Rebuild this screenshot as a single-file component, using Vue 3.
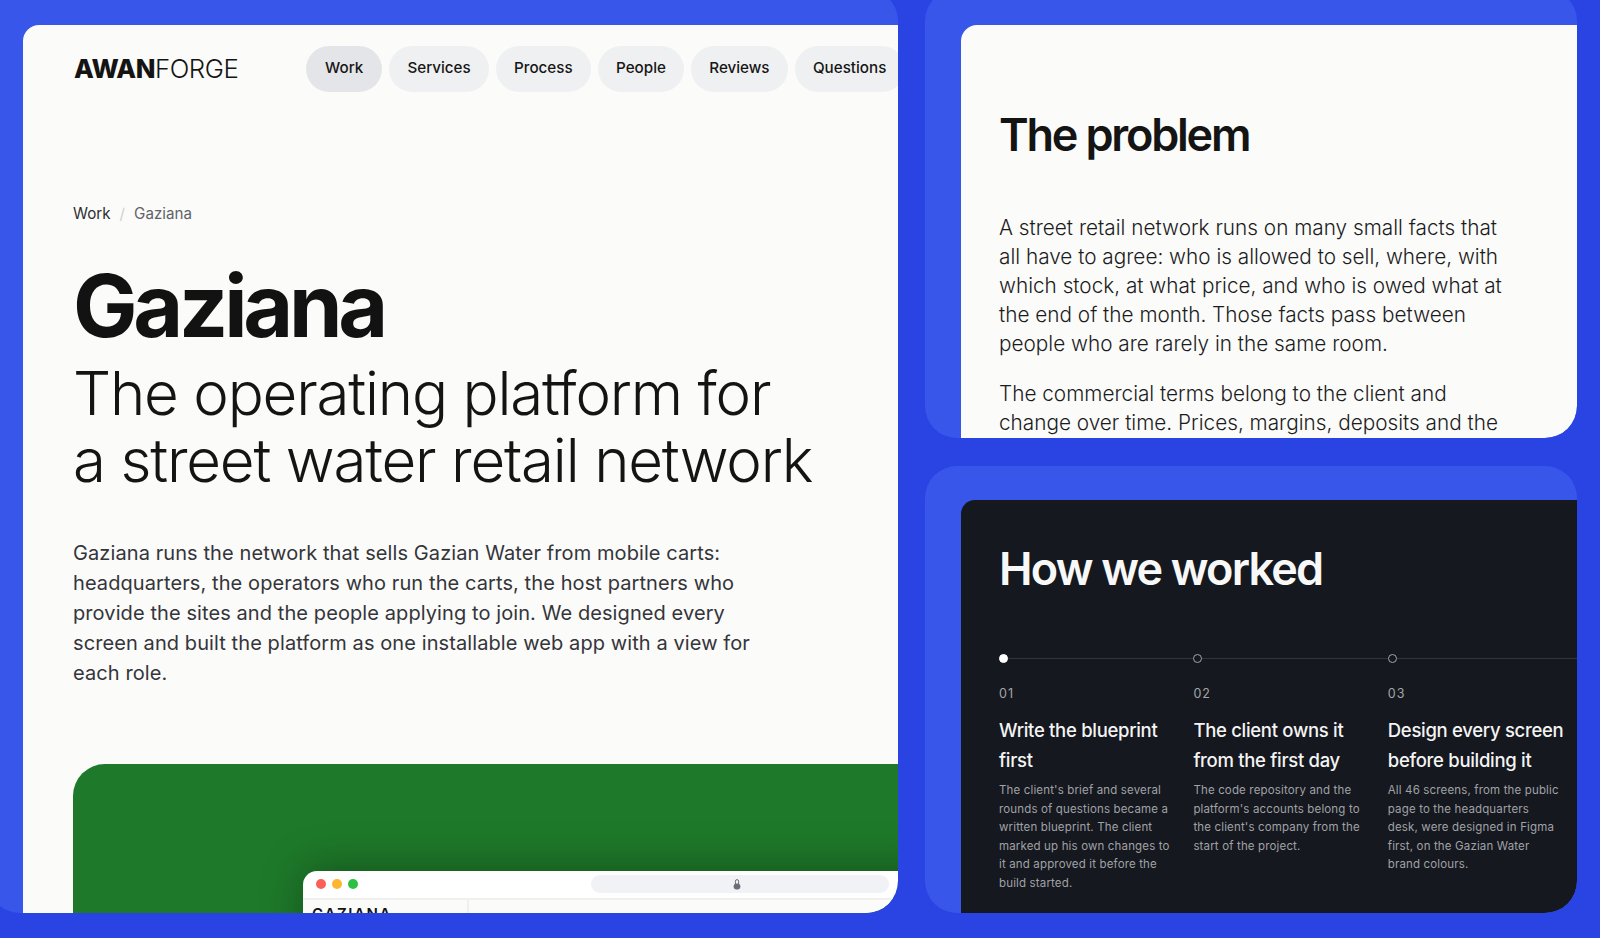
<template>
  <div class="page">
    <section class="frame frame-main">
      <main class="sheet">
        <header class="topbar">
          <div class="logo"><b>AWAN</b><span>FORGE</span></div>
          <nav class="nav">
            <a v-for="(n, i) in nav" :key="n" class="pill" :class="{ active: i === 0 }">{{ n }}</a>
          </nav>
        </header>
        <div class="crumbs">
          <span class="crumb-link">Work</span>
          <span class="crumb-sep">/</span>
          <span class="crumb-here">Gaziana</span>
        </div>
        <h1 class="title">Gaziana</h1>
        <p class="sub">The operating platform for<br />a street water retail network</p>
        <p class="lead">Gaziana runs the network that sells Gazian Water from mobile carts: headquarters, the operators who run the carts, the host partners who provide the sites and the people applying to join. We designed every screen and built the platform as one installable web app with a view for each role.</p>
        <div class="hero">
          <div class="window">
            <div class="chrome">
              <i class="dot red"></i><i class="dot amber"></i><i class="dot green"></i>
              <div class="address">
                <svg class="lock" width="8" height="12" viewBox="0 0 8 12"><path d="M2.4 6V3.2a1.6 1.6 0 0 1 3.2 0V6" fill="none" stroke="#6b6e76" stroke-width="1"/><rect x="0.6" y="5.4" width="6.8" height="6" rx="3" fill="#6b6e76"/></svg>
              </div>
            </div>
            <div class="app">
              <div class="app-side">GAZIANA</div>
              <div class="app-main"></div>
            </div>
          </div>
        </div>
      </main>
    </section>
    <div class="right">
      <section class="frame frame-problem">
        <article class="sheet-problem">
          <h2 class="h2">The problem</h2>
          <p class="para">A street retail network runs on many small facts that all have to agree: who is allowed to sell, where, with which stock, at what price, and who is owed what at the end of the month. Those facts pass between people who are rarely in the same room.</p>
          <p class="para">The commercial terms belong to the client and change over time. Prices, margins, deposits and the</p>
        </article>
      </section>
      <section class="frame frame-how">
        <article class="sheet-how">
          <h2 class="h2 light">How we worked</h2>
          <div class="steps">
            <div v-for="(s, i) in steps" :key="s.n" class="step">
              <div class="track"><i class="node" :class="{ on: i === 0 }"></i></div>
              <div class="num">{{ s.n }}</div>
              <h3 class="step-title">{{ s.t }}</h3>
              <p class="step-text">{{ s.d }}</p>
            </div>
          </div>
        </article>
      </section>
    </div>
  </div>
</template>

<script setup>
const nav = ['Work', 'Services', 'Process', 'People', 'Reviews', 'Questions']
const steps = [
  { n: '01', t: 'Write the blueprint first', d: "The client's brief and several rounds of questions became a written blueprint. The client marked up his own changes to it and approved it before the build started." },
  { n: '02', t: 'The client owns it from the first day', d: "The code repository and the platform's accounts belong to the client's company from the start of the project." },
  { n: '03', t: 'Design every screen before building it', d: 'All 46 screens, from the public page to the headquarters desk, were designed in Figma first, on the Gazian Water brand colours.' }
]
</script>

<style>
html, body { margin: 0; background: #2a43e3; overflow: hidden; }
</style>

<style scoped>
* { box-sizing: border-box; }
.page {
  width: 1612px; height: 949px; margin: -11px 0 0 -12px; padding: 0 23px 25px 0;
  display: grid; grid-template-columns: 910px 652px; column-gap: 27px;
  font-family: Inter, "Liberation Sans", sans-serif; color: #141414; overflow: hidden;
}
.frame { background: #3956eb; border-radius: 32px; overflow: hidden; }
.frame-main { padding: 36px 0 0 35px; display: flex; }
.sheet { flex: 1; min-width: 0; background: #fbfbf9; border-radius: 16px 0 32px 0; overflow: hidden; padding: 21px 0 0 50px; }
.topbar { display: flex; align-items: center; }
.logo { width: 233px; padding-left: 1px; font-size: 25.8px; letter-spacing: -0.45px; line-height: 45px; flex: none; }
.logo b { font-weight: 800; }
.logo span { font-weight: 300; }
.nav { display: flex; gap: 7px; flex: none; }
.pill { height: 45.5px; line-height: 43px; padding: 0 18.2px; border-radius: 23px; background: #eff0f1; font-size: 15.2px; font-weight: 500; color: #161616; white-space: nowrap; }
.pill.active { background: #e4e5e8; padding: 0 19px; }
.crumbs { margin-top: 112px; display: flex; align-items: center; gap: 9px; font-size: 15.2px; line-height: 20px; }
.crumb-link { color: #2e2e30; }
.crumb-sep { color: #cfd0d2; }
.crumb-here { color: #62636a; }
.title { margin: 34px 0 0; font-size: 86px; line-height: 96px; font-weight: 700; letter-spacing: -4.2px; color: #121212; }
.sub { margin: 6px 0 0; font-size: 60px; line-height: 67px; font-weight: 300; letter-spacing: -1.2px; color: #141414; }
.lead { margin: 44px 0 0; width: 700px; font-size: 20px; line-height: 30.1px; letter-spacing: 0.09px; color: #34353a; }
.hero { margin-top: 76px; height: 300px; margin-right: -40px; background: #1e7a2a; border-radius: 32px 0 0 0; padding: 107px 0 0 230px; overflow: clip; }
.window { background: #fff; border-radius: 14px 14px 0 0; height: 200px; box-shadow: 0 -4px 44px rgba(0, 0, 0, 0.32); }
.chrome { height: 29px; display: flex; align-items: center; padding-left: 13px; gap: 6px; border-bottom: 2px solid #f0f0ef; }
.dot { width: 10px; height: 10px; border-radius: 50%; display: block; }
.red { background: #f9605a; }
.amber { background: #fcb62f; }
.green { background: #2cc143; }
.address { margin-left: 227px; width: 298px; height: 18px; border-radius: 9px; background: #f1f2f5; display: flex; align-items: center; justify-content: center; }
.lock { margin-right: 6px; }
.app { display: flex; background: #fbfbf9; height: 100px; }
.app-side { width: 166px; border-right: 2px solid #f0f0ef; font-size: 15px; font-weight: 600; letter-spacing: 1.6px; padding: 4px 0 0 9px; color: #141414; }
.app-main { flex: 1; }
.right { display: flex; flex-direction: column; gap: 27.5px; min-height: 0; }
.frame-problem { height: 449px; padding: 36px 0 0 36px; display: flex; }
.frame-how { flex: 1; min-height: 0; padding: 34px 0 0 36px; display: flex; }
.sheet-problem { flex: 1; min-width: 0; background: #fbfbf9; border-radius: 16px 0 32px 0; overflow: hidden; padding: 85px 0 0 38px; }
.h2 { margin: 0; font-size: 45px; line-height: 50px; font-weight: 600; letter-spacing: -2.2px; color: #141414; }
.h2.light { color: #f8f8f8; font-weight: 600; letter-spacing: -1.8px; }
.para { margin: 0 0 21px; width: 510px; font-size: 20.75px; line-height: 29px; font-weight: 300; color: #1c1c1e; }
.sheet-problem .h2 { margin-bottom: 52.5px; }
.sheet-how { flex: 1; min-width: 0; background: #15181e; border-radius: 14px 0 32px 0; overflow: hidden; padding: 44.5px 0 0 38px; color: #fff; }
.steps { display: grid; grid-template-columns: repeat(3, 194.4px); margin-top: 60px; }
.track { height: 9px; position: relative; background: linear-gradient(#31343a, #31343a) center / 100% 1px no-repeat; }
.node { position: absolute; left: 0; top: 0; width: 9px; height: 9px; border-radius: 50%; border: 1px solid #a3a5a8; background: #15181e; }
.node.on { background: #fff; border-color: #fff; }
.num { margin-top: 22px; font-size: 12.5px; line-height: 18px; letter-spacing: 1px; color: #a4a6a9; }
.step-title { margin: 13px 0 0; width: 184px; font-size: 18.5px; line-height: 29.5px; font-weight: 500; letter-spacing: -0.3px; color: #f4f4f4; }
.step-text { margin: 6px 0 0; width: 173px; font-size: 11.5px; line-height: 18.5px; color: #a0a2a6; letter-spacing: 0.15px; }
</style>
